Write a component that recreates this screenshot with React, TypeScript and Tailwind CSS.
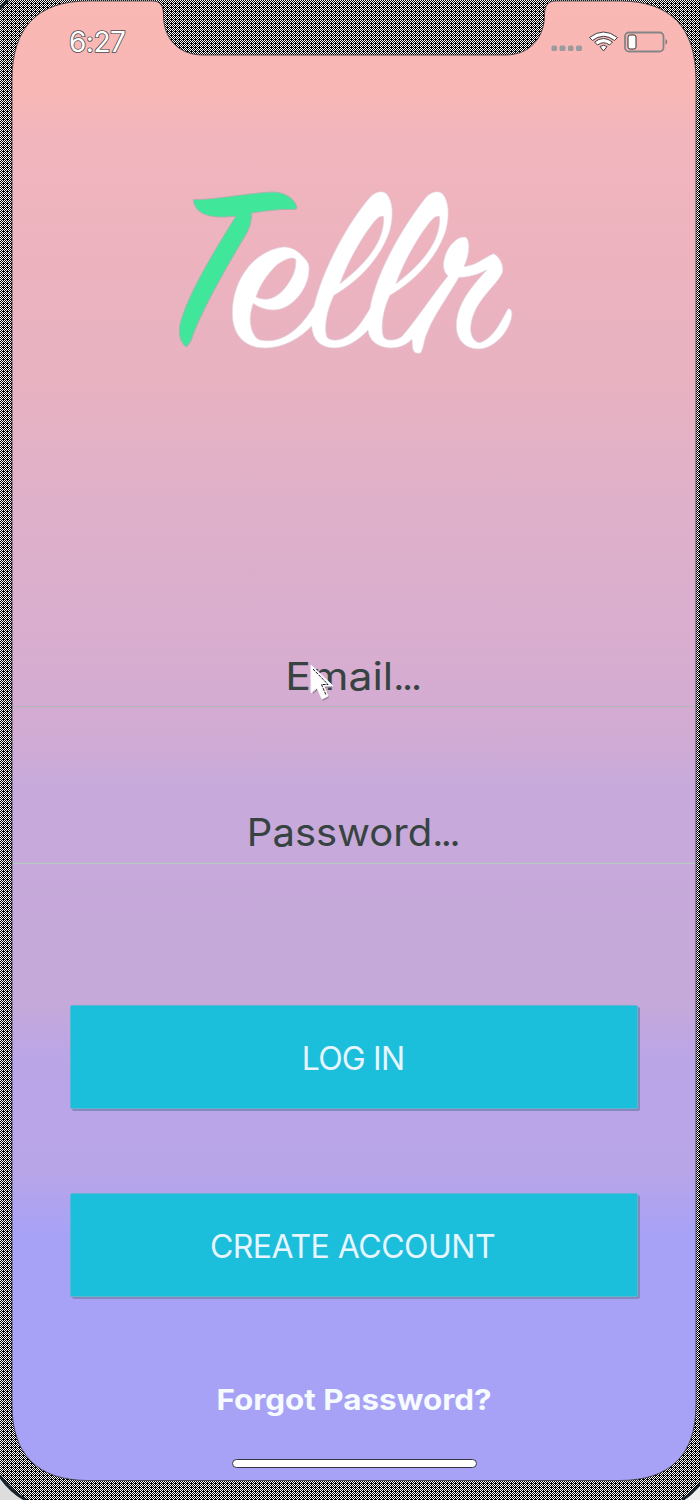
import React from "react";

function Bezel() {
  return (
    <svg className="pointer-events-none absolute inset-0" width="700" height="1500" viewBox="0 0 700 1500" aria-hidden="true">
      <defs>
        <pattern id="mesh" width="4" height="4" patternUnits="userSpaceOnUse">
          <rect width="4" height="4" fill="#000" />
          <path d="M0 0h1v1h-1zM2 0h1v1h-1zM1 1h1v1h-1zM3 1h1v1h-1zM0 2h1v1h-1zM2 2h1v1h-1zM1 3h1v1h-1z" fill="#fff" shapeRendering="crispEdges" />
        </pattern>
      </defs>
      <path
        fillRule="evenodd"
        fill="url(#mesh)"
        d="M0 0H700V1500H0ZM88 1H152C160 1 163 5 163.500 14C163 38 178 55 203 55H506C530 55 545 37 544.500 14C545 5 548 1 556 1H620C670 1 696 27 696 80V1405C696 1455 670 1480.500 620 1480.500H88C38 1480.500 12 1455 12 1405V80C12 27 38 1 88 1Z"
      />
      <path
        fill="none"
        stroke="#303438"
        strokeWidth="0.8"
        d="M88 1H152C160 1 163 5 163.500 14C163 38 178 55 203 55H506C530 55 545 37 544.500 14C545 5 548 1 556 1H620C670 1 696 27 696 80V1405C696 1455 670 1480.500 620 1480.500H88C38 1480.500 12 1455 12 1405V80C12 27 38 1 88 1Z"
      />
      <path d="M0 1477Q10 1491 26 1500H0Z" fill="#ddd" />
      <path d="M0 1476Q10 1491 26 1500M700 1484Q693 1493 682 1500M0 9Q3 4 8 0" fill="none" stroke="#18252c" strokeWidth="3" />
      <path d="M700 1486Q693 1494 685 1500H700Z" fill="#eee" />
    </svg>
  );
}

function StatusBar() {
  return (
    <div className="flex h-[54px] items-start justify-between pl-[57px] pr-[27px] pt-[24px]">
      <span className="text-[28px] leading-[34px] tracking-[-0.5px] text-white [-webkit-text-stroke:1.6px_#4b4b50] [paint-order:stroke_fill]">6:27</span>
      <svg width="118" height="30" viewBox="0 0 118 30" aria-hidden="true">
        <g fill="#999b9d">
          <rect x="0.500" y="20.500" width="5.500" height="5.500" rx="1.500" />
          <rect x="8.500" y="20.500" width="6" height="5.500" rx="1.500" />
          <rect x="17" y="20.500" width="5.500" height="5.500" rx="1.500" />
          <rect x="25" y="20.500" width="6" height="5.500" rx="1.500" />
        </g>
        <g fill="#fff" stroke="#403f43" strokeWidth="1">
          <path d="M38.500 12.500Q52.500 1.500 66.500 12.500L63.500 15.500Q52.500 7 41.500 15.500Z" />
          <path d="M43.500 17Q52.500 10 61.500 17L58.500 20Q52.500 15.500 46.500 20Z" />
          <path d="M49 21.500Q52.500 19 56 21.500L52.500 26Z" />
        </g>
        <rect x="74" y="7.500" width="38.500" height="19" rx="4" fill="none" stroke="#858588" strokeWidth="1.800" />
        <rect x="77" y="10" width="8" height="14" rx="2" fill="#fff" stroke="#333" strokeWidth="1" />
        <path d="M114.500 14Q118 16.500 114.500 20Z" fill="#777" />
      </svg>
    </div>
  );
}

function Logo() {
  return (
    <svg className="mt-[115px] ml-[148px] block" width="370" height="200" viewBox="0 0 1110 600" role="img" aria-label="Tellr">
      <path
        fill="#40e79a"
        stroke="#a9b3ae"
        strokeWidth="3"
        d="M100 89C170 89 260 70 335 66C380 65 405 90 411 112L408 118C360 117 320 122 275 129C276 160 265 185 245 215C190 310 120 430 92 515L80 531C62 522 52 490 62 455C90 360 165 240 228 138C180 145 105 145 100 89Z"
      />
      <path
        fill="#fff"
        fillRule="evenodd"
        stroke="#e0d5e3"
        strokeWidth="2"
        d="M447 300C447 350 400 420 340 420C318 420 295 412 280 400C265 440 268 480 290 505C300 513 320 513 335 512C390 505 430 460 462 408C490 290 570 150 630 82C645 65 668 60 680 72C700 95 700 140 690 180C665 260 600 330 522 376C500 420 490 480 502 503C512 513 535 512 550 505C585 490 610 450 630 415C645 320 720 180 798 82C813 65 836 60 848 72C868 95 868 140 858 180C833 260 768 330 690 376C668 420 660 480 672 503C685 515 710 510 725 500C770 450 820 370 864 318C845 300 848 275 860 245C875 215 900 197 918 202C932 215 928 255 912 290C950 285 970 265 1000 251C1020 260 1030 285 1028 305C1015 345 940 390 932 470C930 500 945 518 960 518C1000 505 1020 460 1043 418C1052 412 1058 425 1055 440C1045 490 1000 537 955 537C910 535 890 505 889 470C888 400 940 345 980 300C950 315 920 323 897 322C860 385 820 440 803 485C792 505 792 530 783 548C775 551 768 550 763 546C755 535 758 520 756 508C735 528 715 534 690 534C650 532 627 510 624 481C590 515 560 534 522 534C480 532 458 510 455 468C420 505 370 534 315 534C250 534 217 490 217 430C217 320 290 240 370 231C400 230 420 248 440 272C446 280 448 290 447 300ZM288 381C325 398 350 380 370 360C400 325 410 295 407 268C395 258 375 268 350 285C320 315 300 345 288 381ZM540 341C600 295 675 225 671 140C655 132 640 160 620 185C590 230 560 285 540 341ZM708 341C768 295 843 225 839 140C823 132 808 160 788 185C758 230 728 285 708 341Z"
      />
    </svg>
  );
}

const fieldClass =
  "flex items-center justify-center border-b text-[38.500px] font-normal text-[#374340]";

const buttonClass =
  "mx-auto block h-[104px] w-[568px] rounded-[2px] border border-[#5eb4d1] bg-[#1bbfdc] pt-[3px] text-center text-[32px] font-normal text-[#e8f5ff] shadow-[2px_2px_0_#8488bd]";

export default function App() {
  return (
    <main className="relative h-[1500px] w-[700px] overflow-hidden bg-black pl-3 pt-px font-['Inter','Liberation_Sans',sans-serif]">
      <div className="h-[1480px] w-[684px] bg-[linear-gradient(180deg,#fab8b4_0,#f8b7b5_90px,#f1b5bd_135px,#e8b2c1_380px,#dfb0c9_500px,#d7add0_660px,#d2abd3_730px,#c7aadb_785px,#c5a9d9_1000px,#baa5e7_1060px,#b8a5e8_1170px,#a8a2f6_1230px,#a8a2f6_1480px)]">
        <StatusBar />
        <Logo />
        <div className={`${fieldClass} mt-[276px] h-[61px] border-[#b0b8b6] pt-px`}>
          <span className="ml-[8px] origin-right scale-x-[1.11]">Email</span>
          <span className="tracking-[-2.2px]">...</span>
        </div>
        <div className={`${fieldClass} mt-[95px] h-[62px] border-[#b5cdbf]`}>
          <span className="ml-[4px] origin-right scale-x-[1.04]">Password</span>
          <span className="tracking-[-2.5px]">...</span>
        </div>
        <button className={`${buttonClass} mt-[141px]`}>
          <span className="mr-[2px] tracking-[-0.8px]">LOG IN</span>
        </button>
        <button className={`${buttonClass} mt-[84px]`}>
          <span className="mr-[3px] tracking-[-0.5px]">CREATE ACCOUNT</span>
        </button>
        <a className="mt-[83px] block h-[40px] origin-center scale-x-[1.083] text-center text-[29px] leading-[40px] font-bold text-[#f6fbff]">Forgot Password?</a>
        <div className="mx-auto mt-[39px] h-[9px] w-[245px] rounded-full border border-[#333641] bg-white" />
      </div>
      <Bezel />
      <svg className="pointer-events-none absolute left-[309px] top-[663px]" width="26" height="40" viewBox="0 0 26 40" aria-hidden="true">
        <path d="M4 4V31L9 27L14 38L20 35L17 25H24Z" fill="#888490" opacity=".8" />
        <path d="M2 2V30L8 25L13 36L19 33L15 23H24Z" fill="#fff" stroke="#f7f6fa" strokeWidth="1" />
        <path d="M4 6L19 21.500H12.500L17 32" fill="none" stroke="#17151b" strokeWidth="1" strokeDasharray="3 1" />
      </svg>
    </main>
  );
}
